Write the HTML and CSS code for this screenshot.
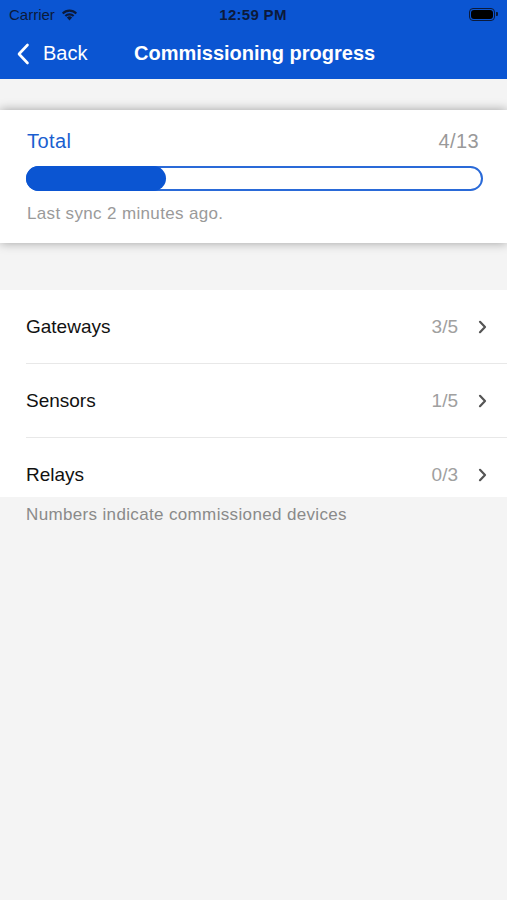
FILE: index.html
```html
<!DOCTYPE html>
<html lang="en">
<head>
    <meta charset="UTF-8">
    <meta name="viewport" content="width=device-width, initial-scale=1.0">
    <title>Commissioning progress</title>
    <link rel="stylesheet" href="styles.css">
</head>
<body>

    <header class="topbar">
        <div class="status-bar">
            <div class="status-left">
                <span>Carrier</span>
                <svg class="wifi" width="17" height="13" viewBox="0 0 16 12">
                    <path d="M8 11.6 L5.5 8.9 A3.5 3.5 0 0 1 10.5 8.9 Z" fill="#0c1a3a"/>
                    <path d="M3.4 6.8 A6.5 6.5 0 0 1 12.6 6.8 L11.2 8.2 A4.5 4.5 0 0 0 4.8 8.2 Z" fill="#0c1a3a"/>
                    <path d="M0.9 4.3 A10 10 0 0 1 15.1 4.3 L13.7 5.7 A8 8 0 0 0 2.3 5.7 Z" fill="#0c1a3a"/>
                </svg>
            </div>
            <div class="status-time">12:59 PM</div>
            <div class="status-right">
                <span class="battery"><span class="battery-level"></span></span>
            </div>
        </div>
        <nav class="nav-bar">
            <a class="back" href="#">
                <svg width="14" height="22" viewBox="0 0 14 22">
                    <path d="M11.5 2 L3 11 L11.5 20" fill="none" stroke="#fff" stroke-width="2.6" stroke-linecap="round" stroke-linejoin="round"/>
                </svg>
                <span>Back</span>
            </a>
            <h1>Commissioning progress</h1>
        </nav>
    </header>

    <main>
        <section class="total-card">
            <div class="total-head">
                <span class="total-label">Total</span>
                <span class="total-count">4/13</span>
            </div>
            <div class="progress">
                <div class="progress-fill" style="width: 31%"></div>
            </div>
            <p class="sync">Last sync 2 minutes ago.</p>
        </section>

        <ul class="device-list">
            <li>
                <span class="name">Gateways</span>
                <span class="count">3/5</span>
                <svg class="chev" width="9" height="14" viewBox="0 0 9 14"><path d="M2 1.8 L7 7 L2 12.2" fill="none" stroke="#555" stroke-width="2.2" stroke-linecap="round" stroke-linejoin="round"/></svg>
            </li>
            <li>
                <span class="name">Sensors</span>
                <span class="count">1/5</span>
                <svg class="chev" width="9" height="14" viewBox="0 0 9 14"><path d="M2 1.8 L7 7 L2 12.2" fill="none" stroke="#555" stroke-width="2.2" stroke-linecap="round" stroke-linejoin="round"/></svg>
            </li>
            <li>
                <span class="name">Relays</span>
                <span class="count">0/3</span>
                <svg class="chev" width="9" height="14" viewBox="0 0 9 14"><path d="M2 1.8 L7 7 L2 12.2" fill="none" stroke="#555" stroke-width="2.2" stroke-linecap="round" stroke-linejoin="round"/></svg>
            </li>
        </ul>
        <p class="footnote">Numbers indicate commissioned devices</p>
    </main>

</body>
</html>
```

FILE: styles.css
```css
body {
    margin: 0;
    font-family: "Liberation Sans", Arial, sans-serif;
    background-color: #f4f4f4;
    color: #111;
    min-height: 900px;
}

.topbar {
    background-color: #0b55d2;
    color: #fff;
}

.status-bar {
    height: 28px;
    display: flex;
    align-items: center;
    justify-content: space-between;
    padding: 0 10px 0 9px;
    font-size: 15px;
    color: #0c1a3a;
}

.status-left {
    display: flex;
    align-items: center;
    gap: 6px;
    width: 110px;
}

.status-time {
    font-weight: bold;
    letter-spacing: 0.3px;
}

.status-right {
    width: 110px;
    display: flex;
    justify-content: flex-end;
}

.battery {
    display: block;
    width: 22px;
    height: 9px;
    border: 1px solid #0c1a3a;
    border-radius: 4px;
    padding: 1px;
    margin-right: 2px;
    position: relative;
}

.battery::after {
    content: "";
    position: absolute;
    right: -4px;
    top: 3px;
    width: 2px;
    height: 4px;
    background: #0c1a3a;
    border-radius: 0 1px 1px 0;
}

.battery-level {
    display: block;
    height: 100%;
    background: #000;
    border-radius: 3px;
}

.nav-bar {
    height: 51px;
    display: flex;
    align-items: center;
    padding-left: 16px;
}

.back {
    display: flex;
    align-items: center;
    gap: 13px;
    color: #fff;
    text-decoration: none;
    font-size: 20px;
    width: 118px;
}

.nav-bar h1 {
    margin: 0;
    font-size: 20px;
    font-weight: bold;
}

main {
    padding-top: 31px;
}

.total-card {
    background-color: #fff;
    padding: 20px 28px 19px 27px;
    box-shadow: 0 0 10px rgba(0, 0, 0, 0.35);
}

.total-head {
    display: flex;
    justify-content: space-between;
    font-size: 20px;
    line-height: 22px;
    letter-spacing: 0.4px;
}

.total-label {
    color: #1a5fd0;
}

.total-count {
    color: #999;
}

.progress {
    margin: 14px -4px 0 -1px;
    height: 21px;
    border: 2px solid #2a6ad8;
    border-radius: 13px;
}

.progress-fill {
    height: 25px;
    margin: -2px 0 0 -2px;
    background-color: #0b55d2;
    border-radius: 13px;
}

.sync {
    margin: 13px 0 0;
    font-size: 17px;
    line-height: 20px;
    letter-spacing: 0.35px;
    color: #9a9a9a;
}

.device-list {
    list-style: none;
    margin: 47px 0 0;
    padding: 0 0 0 26px;
    background-color: #fff;
}

.device-list li {
    height: 74px;
    display: flex;
    align-items: center;
    padding-right: 20px;
    border-bottom: 1px solid #e8e8e8;
    box-sizing: border-box;
    font-size: 19px;
}

.device-list li:last-child {
    border-bottom: none;
    height: 59px;
    padding-top: 15px;
}

.name {
    flex: 1;
}

.count {
    color: #a0a0a0;
    margin-right: 20px;
}

.footnote {
    margin: 8px 0 0 26px;
    font-size: 17px;
    line-height: 20px;
    letter-spacing: 0.35px;
    color: #8a8a8a;
}
```
